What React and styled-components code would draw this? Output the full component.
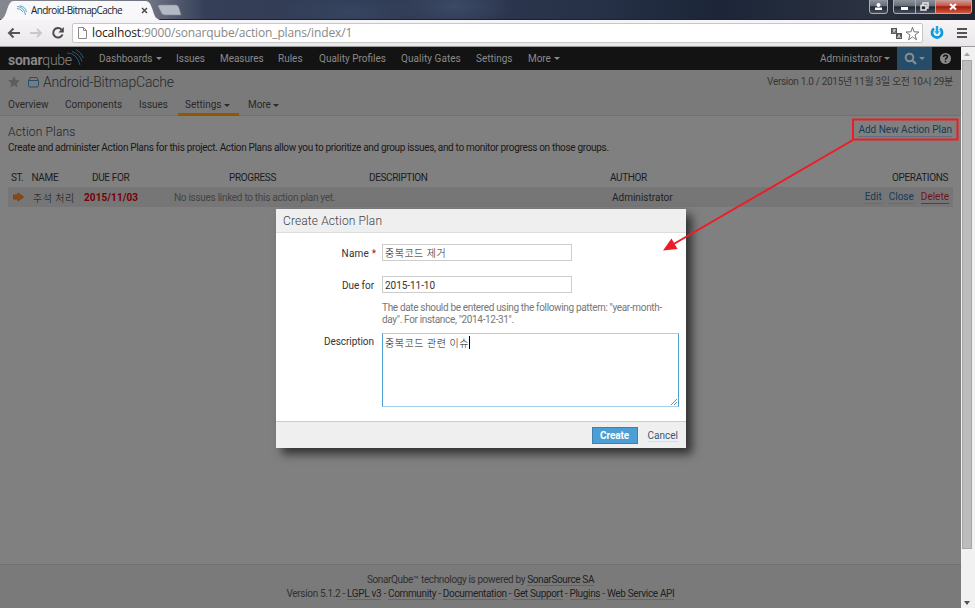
import React from 'react';
import styled, { createGlobalStyle, css } from 'styled-components';

const Global = createGlobalStyle`
  * { box-sizing: border-box; }
  html, body { margin: 0; padding: 0; overflow: hidden; background: #808080; }
  body { font-family: Roboto, 'Noto Sans CJK KR', sans-serif; font-size: 10px; color: #1f2021; }
`;

const Window = styled.div`
  position: relative;
  width: 975px;
  height: 608px;
  display: flex;
  flex-direction: column;
  overflow: hidden;
`;

const TitleBar = styled.div`
  height: 20px;
  flex: none;
  display: flex;
  justify-content: space-between;
  border-bottom: 1px solid #20212f;
  background:
    radial-gradient(ellipse 60px 24px at 455px 6px, #3b4a66 0%, transparent 100%),
    radial-gradient(ellipse 70px 20px at 350px 12px, #364560 0%, transparent 100%),
    linear-gradient(90deg, #85878f 0, #6f7482 150px, #353f58 205px, #303a54 400px, #263046 600px, #1c2638 720px, #2a3140 860px, #1f242f 975px);
`;
const TabStrip = styled.div`display: flex; height: 20px;`;
const Tab = styled.div`
  position: relative;
  width: 158px;
  height: 20px;
  display: flex;
  align-items: center;
  padding-left: 17px;
`;
const TabShape = styled.svg`position: absolute; left: 0; top: 0;`;
const TabIcon = styled.svg`position: relative; flex: none; margin-right: 4px;`;
const TabTitle = styled.span`
  position: relative;
  width: 109px;
  font: 10px/20px 'Open Sans', sans-serif;
  letter-spacing: -0.6px;
  color: #222;
  white-space: nowrap;
`;
const TabClose = styled.svg`position: relative;`;
const NewTab = styled.svg`margin: 4px 0 0 0;`;
const WindowButtons = styled.svg`flex: none;`;

const Toolbar = styled.div`
  height: 27px;
  flex: none;
  display: flex;
  align-items: center;
  padding-left: 7px;
  background: linear-gradient(#f7f4f7, #e9e8e9);
  border-bottom: 1px solid #9c9c9c;
`;
const Address = styled.div`
  display: flex;
  align-items: center;
  width: 851px;
  height: 20px;
  margin: 0 0 0 7px;
  padding-left: 5px;
  background: #fff;
  border: 1px solid #c8c7c8;
  border-radius: 2px;
`;
const Url = styled.span`
  flex: 1;
  margin-left: 5px;
  font: 12px/18px 'Open Sans', sans-serif;
  letter-spacing: -0.14px;
  white-space: nowrap;
  color: #888;
  b { font-weight: 400; color: #222; }
`;
const ToolIcon = styled.svg`flex: none; margin-left: ${p => p.$gap || 0}px;`;

const Viewport = styled.div`flex: 1; display: flex; min-height: 0;`;
const Page = styled.div`
  width: 961px;
  flex: none;
  display: flex;
  flex-direction: column;
  background: #808080;
`;

const Text = styled.span`
  flex: none;
  white-space: nowrap;
  ${p => p.$w && css`width: ${p.$w}px;`}
  letter-spacing: ${p => p.$ls || 0}px;
`;

const Caret = styled.i`
  display: inline-block;
  margin-left: ${p => p.$gap || 4}px;
  vertical-align: 1.5px;
  border: 3px solid transparent;
  border-top-color: currentColor;
  border-bottom: 0;
`;

const NavBar = styled.nav`
  height: 23px;
  flex: none;
  display: flex;
  align-items: center;
  line-height: 24px;
  background: #131313;
  color: #8a8a8a;
`;
const Logo = styled.div`
  display: flex;
  align-items: flex-start;
  width: 99px;
  height: 23px;
  padding-left: 8px;
  font-size: 14px;
  line-height: 27px;
  letter-spacing: -0.25px;
  color: #888;
  b { font-weight: 700; }
  span { font-weight: 300; }
`;
const LogoWaves = styled.svg`margin: 2px 0 0 -5px;`;
const Spacer = styled.div`flex: 1;`;
const SearchButton = styled.div`
  width: 35px;
  height: 23px;
  display: flex;
  align-items: center;
  padding-left: 7px;
  background: #254d69;
  color: #858d93;
`;
const Help = styled.svg`margin: 0 9px 0 7px;`;

const ContextBar = styled.header`
  height: 46px;
  flex: none;
  background: #7a7a7a;
  border-bottom: 1px solid #707070;
`;
const TitleRow = styled.div`
  height: 24px;
  display: flex;
  align-items: center;
  padding: 0 8px;
  line-height: 24px;
  color: #333;
`;
const ProjectName = styled.span`
  margin-left: 4px;
  font-size: 14px;
  letter-spacing: -0.18px;
  color: #28292b;
  font-weight: 300;
`;
const Version = styled.span`
  color: #363636;
  letter-spacing: -0.32px;
`;
const TabsRow = styled.div`
  height: 21px;
  display: flex;
  padding-left: 8px;
  line-height: 21px;
  color: #292929;
`;
const ActiveTab = styled.div`
  width: 61px;
  margin: 0 9px 0 -7px;
  padding-left: 7px;
  height: 22px;
  border-bottom: 3px solid #915800;
`;

const Content = styled.main`
  flex: 1;
  padding: 6px 8px 0;
`;
const HeadRow = styled.div`
  display: flex;
  justify-content: space-between;
  height: 20px;
`;
const Heading = styled.h1`
  margin: 0;
  font-size: 12px;
  font-weight: 300;
  line-height: 20px;
  letter-spacing: 0.15px;
  color: #1f1f1f;
`;
const Link = styled.a`
  display: inline-block;
  height: 13px;
  line-height: 12px;
  margin-left: ${p => p.$gap || 0}px;
  border-bottom: 1px solid ${p => (p.$danger ? '#79302f' : '#5e6f7d')};
  color: ${p => (p.$danger ? '#701316' : '#173a56')};
`;
const AddLink = styled(Link)`margin: 2px 1px 0 0;`;
const Intro = styled.p`
  margin: 0;
  line-height: 11px;
  letter-spacing: -0.325px;
  color: #181818;
  white-space: nowrap;
`;
const Table = styled.div`margin-top: 14px;`;
const TableRow = styled.div`
  display: grid;
  grid-template-columns: 20px 53px 85px 195px 241px 1fr auto;
  align-items: center;
  height: 20px;
  padding: 0 4px 0 3px;
  white-space: nowrap;
  background: ${p => (p.$filled ? '#767676' : 'none')};
`;
const HeaderCell = styled.span`
  padding-left: ${p => p.$pad || 0}px;
  padding-right: ${p => p.$end || 0}px;
  letter-spacing: -0.36px;
  color: #1c1c1e;
`;
const Cell = styled.span`
  padding-left: ${p => p.$pad || 0}px;
  letter-spacing: ${p => p.$ls || 0}px;
  color: ${p => p.$color || '#222'};
  font-weight: ${p => p.$weight || 400};
`;

const Footer = styled.footer`
  height: 44px;
  flex: none;
  padding-top: 8px;
  border-top: 1px solid #707070;
  background: #7a7a7a;
  text-align: center;
  line-height: 14px;
  color: #303030;
`;
const FooterLine = styled.div`
  letter-spacing: ${p => p.$ls || 0}px;
  height: 14px;
  white-space: nowrap;
  a { display: inline-block; height: 13px; line-height: 14px; border-bottom: 1px solid #656565; color: #1e1e1e; }
`;

const ScrollBar = styled.div`
  width: 14px;
  display: flex;
  flex-direction: column;
  align-items: center;
  background: #f1f1f1;
`;
const Thumb = styled.div`
  width: 10px;
  height: 489px;
  margin-right: 2px;
  flex: none;
  background: #bcbcbc;
  border: 1px solid #a6a6a6;
`;
const ScrollArrow = styled.svg`flex: none; margin-right: 2px;`;

const Modal = styled.section`
  position: absolute;
  left: 276px;
  top: 209px;
  width: 410px;
  height: 239px;
  display: flex;
  flex-direction: column;
  background: #fff;
  box-shadow: 6px 6px 9px rgba(0, 0, 0, 0.62);
  color: #444;
`;
const ModalHead = styled.h2`
  height: 24px;
  margin: 0;
  padding-left: 7px;
  font-size: 12px;
  font-weight: 300;
  letter-spacing: 0.12px;
  line-height: 25px;
  color: #444;
  background: #efefef;
  border-bottom: 1px solid #ddd;
`;
const ModalBody = styled.div`
  flex: 1;
  padding: 11px 7px 0 0;
`;
const Field = styled.div`
  display: flex;
  height: ${p => p.$h}px;
`;
const Label = styled.label`
  width: 106px;
  padding: ${p => (p.$raised ? 0 : 1)}px 8px 0 0;
  line-height: 17px;
  text-align: right;
  letter-spacing: ${p => p.$ls || 0}px;
  color: #333;
  em { font-style: normal; color: #a11; letter-spacing: 0; margin-right: -2px; }
`;
const Input = styled.div`
  width: 190px;
  height: 17px;
  padding-left: 2px;
  line-height: 17px;
  letter-spacing: ${p => p.$ls || 0}px;
  font-weight: ${p => (p.$light ? 300 : 400)};
  border: 1px solid #cdcdcd;
  color: ${p => (p.$light ? '#111' : '#333')};
`;
const Hint = styled.p`
  height: 32px;
  margin: 0 0 0 106px;
  padding-top: 1px;
  line-height: 12px;
  letter-spacing: -0.34px;
  white-space: nowrap;
  color: #777;
`;
const TextArea = styled.div`
  width: 297px;
  height: 74px;
  display: flex;
  justify-content: space-between;
  padding-left: 2px;
  letter-spacing: 0.55px;
  font-weight: 300;
  border: 1px solid #4b9fd5;
  border-top-color: #a5cfea;
  border-bottom-color: #a5cfea;
  color: #111;
`;
const Typed = styled.span`
  height: 13px;
  margin-top: 2px;
  line-height: 15px;
  border-right: 1px solid #000;
`;
const Grip = styled.svg`align-self: flex-end; margin: 0 1px 1px 0;`;
const ModalFoot = styled.div`
  height: 27px;
  display: flex;
  align-items: center;
  justify-content: flex-end;
  padding-right: 8px;
  background: #efefef;
  border-top: 1px solid #ccc;
`;
const CreateButton = styled.button`
  width: 46px;
  height: 17px;
  margin: 0 10px 0 0;
  padding: 0;
  border: 1px solid #437fae;
  background: #4b9fd5;
  color: #fff;
  font: 700 10px/15px Roboto, sans-serif;
  letter-spacing: -0.1px;
`;
const Cancel = styled.a`
  height: 13px;
  line-height: 13px;
  border-bottom: 1px solid #d7dfe6;
  color: #33597a;
`;
const Annotation = styled.svg`
  position: absolute;
  left: 0;
  top: 0;
  pointer-events: none;
`;

const NAV = [
  ['Dashboards', 77, 0, true],
  ['Issues', 44, 0],
  ['Measures', 58, -0.05],
  ['Rules', 41, 0],
  ['Quality Profiles', 82, 0],
  ['Quality Gates', 75, 0.05],
  ['Settings', 52, 0],
  ['More', 40, -0.1, true],
];
const FOOTER_LINKS = ['LGPL v3', 'Community', 'Documentation', 'Get Support', 'Plugins', 'Web Service API'];

function BrowserChrome() {
  return (
    <>
      <TitleBar>
        <TabStrip>
          <Tab>
            <TabShape width="160" height="20">
              <path d="M0 20C5 18 5 15 8 7C10 2 11 1 15 1H145C149 1 150 3 152 8C155 17 155 18 160 20Z" fill="#f8f7f9" />
            </TabShape>
            <TabIcon width="10" height="11" fill="none" stroke="#4d9bc9">
              <path d="M0 1.500Q7 1.500 8.500 10M2.500 .8Q8.500 1.500 9.500 7M0 3.500Q4 3.500 6 7" strokeWidth=".9" />
            </TabIcon>
            <TabTitle>Android-BitmapCache</TabTitle>
            <TabClose width="8" height="8" stroke="#444" strokeWidth="1.4"><path d="M2 2L7 7M7 2L2 7" /></TabClose>
          </Tab>
          <NewTab width="24" height="13"><path d="M2 1H18Q20 1 21 4L23 11H7Q4 11 3 8L0 2Q0 1 2 1Z" fill="#b4bac4" stroke="#858b99" strokeWidth=".6" /></NewTab>
        </TabStrip>
        <WindowButtons width="107" height="17">
          <defs>
            <linearGradient id="glass" x2="0" y2="1"><stop stopColor="#8d929b" /><stop offset=".45" stopColor="#656b76" /><stop offset=".5" stopColor="#20252f" /><stop offset="1" stopColor="#4c525e" /></linearGradient>
            <linearGradient id="red" x2="0" y2="1"><stop stopColor="#d0a19b" /><stop offset=".42" stopColor="#c1574a" /><stop offset=".5" stopColor="#a51d10" /><stop offset="1" stopColor="#d35e3e" /></linearGradient>
          </defs>
          <path d="M1.500 0V11Q1.500 13.500 4 13.500H17Q19.500 13.500 19.500 11V0" fill="url(#glass)" stroke="#a9adb5" />
          <path d="M25.500 0V11Q25.500 13.500 28 13.500H49V0" fill="url(#glass)" stroke="#a9adb5" />
          <path d="M47.500 0V13.500H67.500V0" fill="url(#glass)" stroke="#a9adb5" />
          <path d="M67.500 0V13.500H101Q103.500 13.500 103.500 11V0" fill="url(#red)" stroke="#c4a6a2" />
          <g fill="#fff"><circle cx="10.500" cy="5" r="2" /><path d="M7 10V7.500H14V10Z" /><path d="M33 7H40V10H33Z" /></g>
          <path d="M53 5.500H58V10H53ZM55 5V3H60V8H58" fill="none" stroke="#e6e6e8" strokeWidth="1.5" />
          <path d="M82 4L88 9.500M88 4L82 9.500" stroke="#fff" strokeWidth="2" />
        </WindowButtons>
      </TitleBar>
      <Toolbar>
        <ToolIcon width="14" height="14" fill="none" stroke="#555" strokeWidth="2"><path d="M13 7H2M6.500 2.500L2 7L6.500 11.500" /></ToolIcon>
        <ToolIcon $gap={9} width="13" height="14" fill="none" stroke="#c8c8c8" strokeWidth="1.8"><path d="M0 7H11M7 3L11 7L7 11" /></ToolIcon>
        <ToolIcon $gap={8} width="14" height="14"><path d="M10.500 3.500A4.800 4.800 0 1 0 11.500 8.500" fill="none" stroke="#4c4c4c" strokeWidth="2" /><path d="M12.800 1V6.500H7.300Z" fill="#4c4c4c" /></ToolIcon>
        <Address>
          <ToolIcon width="9" height="12" fill="#fff" stroke="#888"><path d="M.5 .5H5.500L8.500 3.500V11.500H.5ZM5.500 .5V3.500H8.500" /></ToolIcon>
          <Url><b>localhost</b>:9000/sonarqube/action_plans/index/1</Url>
          <ToolIcon width="11" height="11"><path d="M0 0H6V6H0ZM5 5H11V11H5Z" fill="#555" /><path d="M1.500 2H5M3.200 1V2M1.500 4.800L4.500 2.200M2 2.500L4.500 4.800M6.500 10L8 6.500L9.500 10M7 9H9" stroke="#fff" strokeWidth=".7" fill="none" /></ToolIcon>
          <ToolIcon $gap={3} width="15" height="15" fill="#fff" stroke="#686868" strokeWidth=".9"><path d="M7.500 1.200L9 5.800L14 6L10 9L11.500 13.800L7.500 10.900L3.500 13.800L5 9L1 6L6 5.800Z" /></ToolIcon>
          <Text $w={2} />
        </Address>
        <ToolIcon $gap={7} width="14" height="14" fill="none"><path d="M4 2.500A5 5 0 1 0 10 2.500" stroke="#0d9bdc" strokeWidth="2.800" /><path d="M7 0V6" stroke="#1da8e4" strokeWidth="2.400" /><path d="M4.200 5.200H9.800L7 8.500Z" fill="#1da8e4" /></ToolIcon>
        <ToolIcon $gap={13} width="10" height="10" fill="#535353"><path d="M0 0H10V2H0ZM0 4H10V6H0ZM0 8H10V10H0Z" /></ToolIcon>
      </Toolbar>
    </>
  );
}

function CreateDialog() {
  return (
    <Modal>
      <ModalHead>Create Action Plan</ModalHead>
      <ModalBody>
        <Field $h={32}><Label $ls={0.2}>Name <em>*</em></Label><Input $light $ls={0.5}>중복코드 제거</Input></Field>
        <Field $h={25}><Label $ls={-0.05}>Due for</Label><Input $ls={-0.05}>2015-11-10</Input></Field>
        <Hint>The date should be entered using the following pattern: "year-month-<br />day". For instance, "2014-12-31".</Hint>
        <Field $h={74}>
          <Label $raised $ls={-0.05}>Description</Label>
          <TextArea>
            <Typed>중복코드 관련 이슈</Typed>
            <Grip width="6" height="6" stroke="#888"><path d="M0 6L6 0M3 6L6 3" /></Grip>
          </TextArea>
        </Field>
      </ModalBody>
      <ModalFoot><CreateButton>Create</CreateButton><Cancel>Cancel</Cancel></ModalFoot>
    </Modal>
  );
}

export default function App() {
  return (
    <Window>
      <Global />
      <BrowserChrome />
      <Viewport>
        <Page>
          <NavBar>
            <Logo>
              <b>sonar</b><span>qube</span>
              <LogoWaves width="18" height="18" fill="none" stroke="#28587a"><path d="M0 4Q10 4 13 16M5 2.500Q13 5 15 12.500M9 .5Q14 3 16.500 9" /></LogoWaves>
            </Logo>
            {NAV.map(([name, w, ls, menu]) => <Text key={name} $w={w} $ls={ls}>{name}{menu && <Caret $gap={3} />}</Text>)}
            <Spacer />
            <Text $w={77} $ls={0.1}>Administrator<Caret $gap={2} /></Text>
            <SearchButton>
              <svg width="13" height="13" fill="none" stroke="currentColor"><circle cx="5.500" cy="5.500" r="3.800" strokeWidth="2" /><path d="M8.500 8.500L12 12" strokeWidth="2.300" /></svg>
              <Caret $gap={2} />
            </SearchButton>
            <Help width="13" height="13"><circle cx="6.500" cy="6.500" r="5.500" fill="#8a8a8a" /><path d="M4.600 5Q4.600 3.200 6.500 3.200T8.400 4.800Q8.400 5.700 7.300 6.300Q6.500 6.800 6.500 7.700M6.500 8.700V10.200" fill="none" stroke="#131313" strokeWidth="1.500" /></Help>
          </NavBar>
          <ContextBar>
            <TitleRow>
              <svg width="12" height="12"><path d="M6 0L7.700 4L12 4.300L8.700 7.200L9.700 11.500L6 9.200L2.300 11.500L3.300 7.200L0 4.300L4.300 4Z" fill="#5d5d5d" /></svg>
              <Text $w={8} />
              <svg width="11" height="12" fill="none" stroke="#254f6d"><path d="M.5 4.500H10.500V9.500Q10.500 11 9 11H2Q.5 11 .5 9.500ZM1 4.500L2 1.500H9L10 4.500" /></svg>
              <ProjectName>Android-BitmapCache</ProjectName>
              <Spacer />
              <Version>Version 1.0 / 2015년 11월 3일 오전 10시 29분</Version>
            </TitleRow>
            <TabsRow>
              <Text $w={57}>Overview</Text>
              <Text $w={74}>Components</Text>
              <Text $w={46}>Issues</Text>
              <ActiveTab><Text>Settings<Caret $gap={2} /></Text></ActiveTab>
              <Text $ls={-0.1}>More<Caret $gap={2} /></Text>
            </TabsRow>
          </ContextBar>
          <Content>
            <HeadRow><Heading>Action Plans</Heading><AddLink>Add New Action Plan</AddLink></HeadRow>
            <Intro>Create and administer Action Plans for this project. Action Plans allow you to prioritize and group issues, and to monitor progress on those groups.</Intro>
            <Table>
              <TableRow>
                <HeaderCell>ST.</HeaderCell>
                <HeaderCell $pad={0.5}>NAME</HeaderCell>
                <HeaderCell $pad={8}>DUE FOR</HeaderCell>
                <HeaderCell $pad={60}>PROGRESS</HeaderCell>
                <HeaderCell $pad={5}>DESCRIPTION</HeaderCell>
                <HeaderCell $pad={5}>AUTHOR</HeaderCell>
                <HeaderCell $end={1}>OPERATIONS</HeaderCell>
              </TableRow>
              <TableRow $filled>
                <svg width="14" height="12"><path d="M2.500 4H7V2L12.500 6L7 10V8H2.500Z" fill="#8a4812" stroke="#7d4310" /></svg>
                <Cell $ls={0.5} $pad={2} $weight={300} $color="#111">주석 처리</Cell>
                <Cell $weight={700} $color="#760008" $ls={0.08}>2015/11/03</Cell>
                <Cell $color="#444" $pad={5} $ls={-0.29}>No issues linked to this action plan yet.</Cell>
                <span />
                <Cell $pad={7}>Administrator</Cell>
                <span><Link>Edit</Link><Link $gap={7}>Close</Link><Link $danger $gap={7}>Delete</Link></span>
              </TableRow>
            </Table>
          </Content>
          <Footer>
            <FooterLine $ls={-0.36}>SonarQube™ technology is powered by <a>SonarSource SA</a></FooterLine>
            <FooterLine $ls={-0.34}>Version 5.1.2{FOOTER_LINKS.map(l => <React.Fragment key={l}> - <a>{l}</a></React.Fragment>)}</FooterLine>
          </Footer>
        </Page>
        <ScrollBar>
          <ScrollArrow width="12" height="13"><path d="M3 9H9L6 5.500Z" fill="#a3a3a3" /></ScrollArrow>
          <Thumb />
          <Spacer />
          <ScrollArrow width="12" height="12"><path d="M3 5H9L6 9Z" fill="#505050" /></ScrollArrow>
        </ScrollBar>
      </Viewport>
      <CreateDialog />
      <Annotation width="975" height="608" fill="none" stroke="#ee1c25">
        <path d="M853 119.500H957.500V139.500H853Z" strokeWidth="2" />
        <path d="M853 140L672 245" strokeWidth="2" />
        <path d="M663 250.500L671.500 238.500L677.500 249Z" fill="#ee1c25" stroke="none" />
      </Annotation>
    </Window>
  );
}
